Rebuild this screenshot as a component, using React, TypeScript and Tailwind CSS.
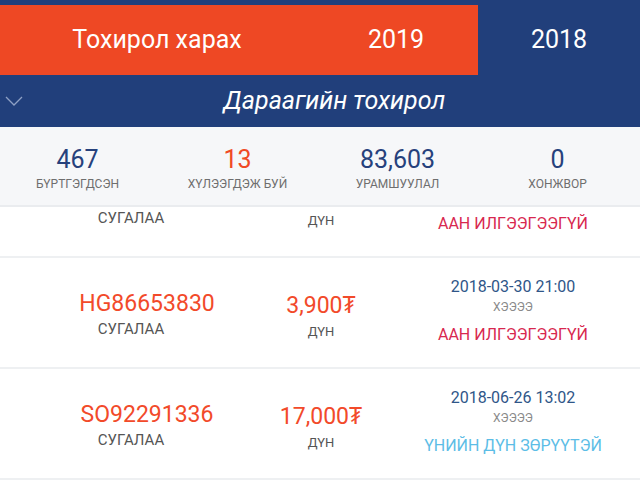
const font = { fontFamily: "Roboto, 'Noto Sans', sans-serif" };

type Row = {
  code: string;
  amount: string;
  date: string;
  status: string;
  statusClass: string;
};

const rows: Row[] = [
  { code: "JK41207795", amount: "5,000₮", date: "2018-02-14 18:45", status: "ААН ИЛГЭЭГЭЭГҮЙ", statusClass: "text-[#d8284f]" },
  { code: "HG86653830", amount: "3,900₮", date: "2018-03-30 21:00", status: "ААН ИЛГЭЭГЭЭГҮЙ", statusClass: "text-[#d8284f]" },
  { code: "SO92291336", amount: "17,000₮", date: "2018-06-26 13:02", status: "ҮНИЙН ДҮН ЗӨРҮҮТЭЙ", statusClass: "text-[#5cbde6]" },
];

const stats = [
  { value: "467", label: "БҮРТГЭГДСЭН", color: "text-[#26417c]" },
  { value: "13", label: "ХҮЛЭЭГДЭЖ БУЙ", color: "text-[#f04a25]" },
  { value: "83,603", label: "УРАМШУУЛАЛ", color: "text-[#26417c]" },
  { value: "0", label: "ХОНЖВОР", color: "text-[#26417c]" },
];

function Chevron() {
  return (
    <svg width="18" height="10" viewBox="0 0 18 10" fill="none">
      <path d="M1 1l8 8 8-8" stroke="#8ea0c4" strokeWidth="1.3" />
    </svg>
  );
}

export default function App() {
  return (
    <div className="w-[640px] h-[480px] overflow-hidden bg-white flex flex-col" style={font}>
      {/* header */}
      <div className="bg-[#213f7b] pt-[5px]">
        <div className="flex h-[70px]">
          <div className="w-[478px] bg-[#ee4824] flex items-center text-white text-[25px]">
            <div className="w-[314px] text-center">Тохирол харах</div>
            <div className="w-[164px] text-center">2019</div>
          </div>
          <div className="flex-1 flex items-center justify-center text-white text-[25px]">2018</div>
        </div>
        <div className="h-[52px] flex items-center">
          <div className="ml-[5px] w-[18px] flex">
            <Chevron />
          </div>
          <div className="flex-1 text-center italic text-white text-[25px] pl-[6px]">Дараагийн тохирол</div>
        </div>
      </div>

      {/* stats */}
      <div className="h-[80px] bg-[#f6f7f9] grid grid-cols-4 items-start border-b-2 border-[#eaecef]">
        {stats.map((s) => (
          <div key={s.label} className="flex flex-col items-center pr-[5px] pt-[19px]">
            <div className={`text-[25px] leading-[28px] ${s.color}`}>{s.value}</div>
            <div className="text-[12px] leading-[14px] mt-[3px] text-[#6e6e6e]">{s.label}</div>
          </div>
        ))}
      </div>

      {/* list */}
      <div className="flex-1 overflow-hidden">
        <div className="-mt-[60px]">
          {rows.map((r) => (
            <div key={r.code} className="h-[111px] flex pl-[60px] border-b-2 border-[#eef0f2]">
              <div className="w-[174px] flex flex-col items-center pt-[33px]">
                <div className="text-[23px] leading-[26px] text-[#f24a2a]">{r.code}</div>
                <div className="text-[15px] leading-[18px] mt-[3px] mr-[32px] text-[#555]">СУГАЛАА</div>
              </div>
              <div className="w-[174px] flex flex-col items-center pt-[35px]">
                <div className="text-[23px] leading-[26px] text-[#f24a2a]">{r.amount}</div>
                <div className="text-[13px] leading-[16px] mt-[5px] text-[#555]">ДҮН</div>
              </div>
              <div className="w-[210px] flex flex-col items-center pt-[19px]">
                <div className="text-[16px] leading-[20px] text-[#2f5688]">{r.date}</div>
                <div className="text-[12px] leading-[14px] mt-[3px] text-[#8a8a8a]">ХЭЭЭЭ</div>
                <div className={`text-[16px] leading-[20px] mt-[11px] ${r.statusClass}`}>{r.status}</div>
              </div>
            </div>
          ))}
        </div>
      </div>
    </div>
  );
}
